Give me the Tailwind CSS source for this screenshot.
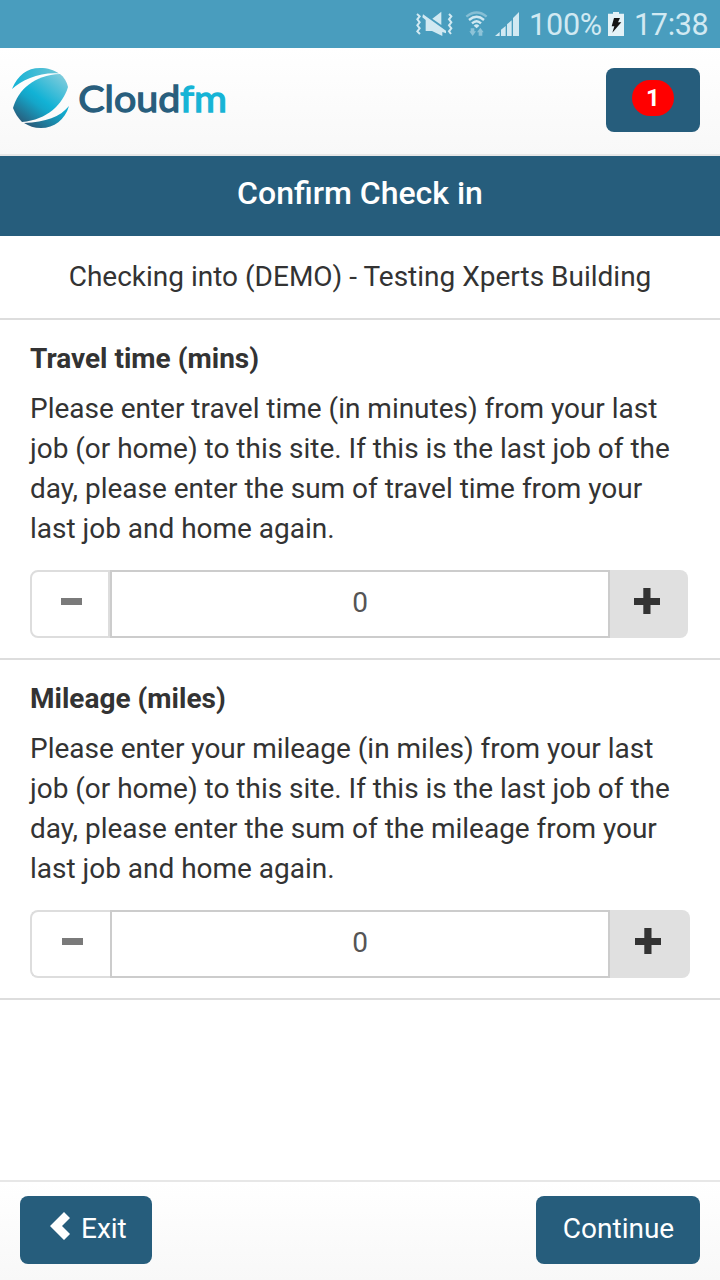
<!DOCTYPE html>
<html lang="en">
<head>
<meta charset="utf-8">
<title>Confirm Check in</title>
<script src="https://cdn.jsdelivr.net/npm/@tailwindcss/browser@4"></script>
</head>
<body class="flex h-[1280px] w-[720px] flex-col overflow-hidden bg-white font-['Roboto',sans-serif] text-[28px] leading-[40px] text-[#333]">
  <div class="flex h-12 shrink-0 items-start bg-[#499dbe] pl-[400px] text-[30.5px] leading-[50px] text-[#d1e9f2]">
    <svg class="h-12 w-[129px] shrink-0" viewBox="0 0 387 144" fill="currentColor">
      <path d="M51 42l8 7-7 9 7 9-7 9 7 9-7 9 8 8M147 42l7 7-7 9 7 9-7 9 7 9-7 9 6 8" fill="none" stroke="currentColor" stroke-width="6"/>
      <path d="M97 56L124 35V75ZM69 43L138 92V100L127 96V108L96 93H77V60L67 52Z"/>
      <g fill="none" stroke="currentColor" stroke-width="7">
        <path d="M199 50Q230 25 260 50" opacity=".45"/>
        <path d="M207 60Q230 41 252 60M216 70Q230 57 243 70"/>
      </g>
      <path d="M221 77Q230 69 238 77L230 85Z"/>
      <path d="M212 85h11v9h5l-10 14-10-14h4ZM236 107v-10h-5l10-14 10 14h-4v10Z" opacity=".5"/>
      <path d="M285 108L299 96V108ZM303 108V89L317 78V108ZM321 108V73L335 61V108ZM339 108V54L357 36V108Z"/>
    </svg>
    <span class="w-[79px] tracking-[-0.2px]">100%</span>
    <svg class="mt-3 h-6 w-4 shrink-0" viewBox="0 0 48 72"><path fill="#e4f2f7" d="M0 5H15V0H33V5H48V72H0Z"/><path fill="#151515" d="M18 18H36L30 31H40L13 62L19 43H11Z"/></svg>
    <span class="ml-[10px] tracking-[-0.3px]">17:38</span>
  </div>

  <header class="flex h-[108px] shrink-0 items-start justify-between border-b-2 border-[#e7e7e7] bg-linear-to-b from-white to-[#f8f8f8] pr-5 pt-5">
    <svg class="h-[62px] w-[240px]" viewBox="0 0 240 62">
      <defs>
        <linearGradient id="ball" x1=".9" y1=".05" x2=".1" y2=".95"><stop offset="0" stop-color="#7ccbdc"/><stop offset=".5" stop-color="#12b2d5"/><stop offset=".62" stop-color="#14a6c9"/><stop offset="1" stop-color="#285e7d"/></linearGradient>
        <linearGradient id="top" x1="0" y1="0" x2="1" y2="0"><stop offset="0" stop-color="#12b2d5"/><stop offset="1" stop-color="#6dc5d6"/></linearGradient>
        <linearGradient id="bottom" x1="0" y1=".7" x2="1" y2="0"><stop offset="0" stop-color="#285e7d"/><stop offset=".7" stop-color="#12a5c8"/><stop offset="1" stop-color="#12b2d5"/></linearGradient>
      </defs>
      <path fill="url(#top)" d="M12 21C18 7 27 0 40 0C48 0 54 2 59 5.5C40 4 22 12 12 21Z"/>
      <path fill="url(#ball)" d="M13 40C18 22 34 7 60 6C64 9 67 14 68 19C63 36 47 52 22 54C18 50 15 45 13 40Z"/>
      <path fill="url(#bottom)" d="M24 55C46 54 60 49 69 38C65 52 54 60 41 60C34 60 29 58 24 55Z"/>
      <g class="font-['Lato',sans-serif] text-[37px]" stroke-width="1.3">
        <text x="78.3" y="43.8" textLength="102" lengthAdjust="spacingAndGlyphs" fill="#285e7d" stroke="#285e7d">Cloud</text>
        <text x="180" y="43.8" textLength="47" lengthAdjust="spacingAndGlyphs" fill="#16b4d6" stroke="#16b4d6">fm</text>
      </g>
    </svg>
    <div class="flex h-16 w-[94px] justify-center rounded-lg bg-[#265d7c] pt-3">
      <span class="h-9 w-[42px] rounded-full bg-[#f00] text-center text-[24px] font-bold leading-9 text-white">1</span>
    </div>
  </header>

  <h1 class="h-20 shrink-0 bg-[#265d7c] text-center text-[32px] font-medium leading-[74px] text-white">Confirm Check in</h1>
  <p class="h-[84px] shrink-0 border-b-2 border-[#ddd] pt-[21px] text-center">Checking into (DEMO) - Testing Xperts Building</p>

  <section class="h-[340px] shrink-0 border-b-2 border-[#ddd] px-[30px] pt-[19px]">
    <h2 class="font-bold">Travel time (mins)</h2>
    <p class="mt-[10px] whitespace-nowrap tracking-[-0.015px]">Please enter travel time (in minutes) from your last<br>job (or home) to this site. If this is the last job of the<br>day, please enter the sum of travel time from your<br>last job and home again.</p>
    <div class="mt-[21px] flex h-17">
      <div class="flex w-20 rounded-l-lg border-2 border-[#ddd] pl-[29px] pt-[26px]"><div class="h-[7px] w-[21px] bg-[#7a7a7a]"></div></div>
      <div class="w-[500px] border-2 border-[#ccc] text-center leading-[61px] text-[#555]">0</div>
      <div class="w-[78px] rounded-r-lg bg-[#e0e0e0] pl-6 pt-[18px]"><svg class="size-[26px]" viewBox="0 0 26 26"><path fill="#333" d="M9.3 0H16.5V10H26V17H16.5V26H9.3V17H0V10H9.3Z"/></svg></div>
    </div>
  </section>

  <section class="h-[340px] shrink-0 border-b-2 border-[#ddd] px-[30px] pt-[19px]">
    <h2 class="font-bold">Mileage (miles)</h2>
    <p class="mt-[10px] whitespace-nowrap tracking-[-0.015px]">Please enter your mileage (in miles) from your last<br>job (or home) to this site. If this is the last job of the<br>day, please enter the sum of the mileage from your<br>last job and home again.</p>
    <div class="mt-[21px] flex h-17">
      <div class="flex w-20 rounded-l-lg border-2 border-r-0 border-[#ddd] pl-[30px] pt-[26px]"><div class="h-[7px] w-[21px] bg-[#7a7a7a]"></div></div>
      <div class="w-[500px] border-2 border-[#ccc] text-center leading-[61px] text-[#555]">0</div>
      <div class="w-20 rounded-r-lg bg-[#e0e0e0] pl-[25px] pt-[18px]"><svg class="size-[26px]" viewBox="0 0 26 26"><path fill="#333" d="M9.3 0H16.5V10H26V17H16.5V26H9.3V17H0V10H9.3Z"/></svg></div>
    </div>
  </section>

  <footer class="mt-auto flex h-[100px] shrink-0 items-start justify-between border-t-2 border-[#e7e7e7] bg-linear-to-b from-white to-[#f8f8f8] px-5 pt-[14px] leading-[65px] text-white">
    <div class="flex h-17 w-[132px] rounded-lg bg-[#265d7c] pl-[30px]">
      <svg class="mt-4 h-7 w-5" viewBox="0 0 20 28"><path fill="#fff" d="M14 0L20 6L12 14L20 22L14 28L0 14Z"/></svg>
      <span class="ml-[11px]">Exit</span>
    </div>
    <div class="h-17 w-[164px] rounded-lg bg-[#265d7c] pl-px text-center">Continue</div>
  </footer>
</body>
</html>
